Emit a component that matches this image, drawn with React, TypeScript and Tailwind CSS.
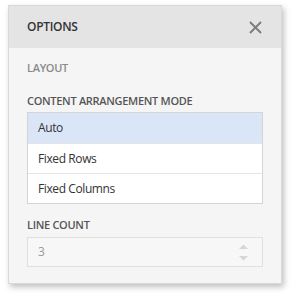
import { useState } from "react";

const CloseIcon = () => (
  <svg width="13" height="13" viewBox="0 0 13 13" fill="none">
    <path d="M1 1l11 11M12 1L1 12" stroke="#7a7a7a" strokeWidth="1.8" />
  </svg>
);

const SpinUp = () => (
  <svg width="9" height="5" viewBox="0 0 9 5">
    <path d="M0 5L4.5 0.5 9 5z" fill="#d6d6d6" />
  </svg>
);

const SpinDown = () => (
  <svg width="9" height="5" viewBox="0 0 9 5">
    <path d="M0 0L4.5 4.5 9 0z" fill="#d6d6d6" />
  </svg>
);

const modes = ["Auto", "Fixed Rows", "Fixed Columns"];

export default function App() {
  const [mode, setMode] = useState("Auto");

  return (
    <div
      className="w-[296px] h-[300px] bg-white pt-[5px] pl-[8px]"
      style={{ fontFamily: '"Open Sans", "Noto Sans", sans-serif' }}
    >
      <div className="w-[274px] h-[279px] flex flex-col bg-[#f5f5f5] border border-[#d9d9d9] shadow-[2px_3px_6px_rgba(0,0,0,0.25)]">
        {/* Header */}
        <div className="h-[42px] shrink-0 flex items-center justify-between bg-[#e4e4e4] pl-[18px] pr-[19px]">
          <span className="text-[12px] font-semibold text-[#333] tracking-[-0.3px]">OPTIONS</span>
          <CloseIcon />
        </div>

        {/* Body */}
        <div className="flex flex-col px-[18px]">
          <div className="h-[40px] flex items-center text-[11px] font-semibold text-[#8a8a8a] tracking-[-0.3px]">
            LAYOUT
          </div>

          <div className="mt-[3px] h-[20px] flex items-center text-[11px] font-semibold text-[#555] tracking-[-0.3px]">
            CONTENT ARRANGEMENT MODE
          </div>

          <div className="mt-[1px] flex flex-col border border-[#d4d4d4] bg-white">
            {modes.map((m, i) => (
              <button
                key={m}
                onClick={() => setMode(m)}
                className={`h-[30px] flex items-center pl-[10px] text-left text-[12px] text-[#333] tracking-[-0.4px] ${
                  i > 0 ? "border-t border-[#e5e5e5]" : ""
                } ${mode === m ? "bg-[#dae6f8]" : "bg-white"}`}
              >
                {m}
              </button>
            ))}
          </div>

          <div className="mt-[11px] h-[20px] flex items-center text-[11px] font-semibold text-[#555] tracking-[-0.3px]">
            LINE COUNT
          </div>

          <div className="mt-[2px] h-[30px] flex items-center justify-between border border-[#e0e0e0] bg-[#f7f7f7] pl-[10px] pr-[14px]">
            <span className="text-[12px] text-[#999]">3</span>
            <div className="flex flex-col gap-[7px]">
              <SpinUp />
              <SpinDown />
            </div>
          </div>
        </div>
      </div>
    </div>
  );
}
